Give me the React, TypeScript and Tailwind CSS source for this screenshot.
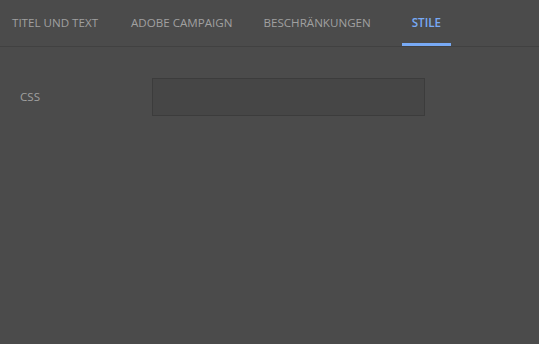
import React from 'react';

const tabs = [
  { label: 'TITEL UND TEXT', cls: 'ml-[2px]' },
  { label: 'ADOBE CAMPAIGN', cls: 'ml-[13px]' },
  { label: 'BESCHRÄNKUNGEN', cls: 'ml-[11px]' },
  { label: 'STILE', cls: 'ml-[21px]' },
];

export default function App() {
  const active = 3;

  return (
    <div className="w-[539px] h-[344px] bg-[#4b4b4b] font-['Open_Sans',sans-serif] overflow-hidden">
      <div className="flex h-[47px] border-b border-[#414141]">
        {tabs.map((tab, i) => (
          <button
            key={tab.label}
            className={
              i === active
                ? `${tab.cls} px-[10px] text-[11.6px] font-semibold text-[#78aaf5] border-b-[3px] border-[#78aaf5] pt-[3px]`
                : `${tab.cls} px-[10px] text-[11.6px] text-[#a0a0a0] border-b-[3px] border-transparent pt-[3px]`
            }
          >
            {tab.label}
          </button>
        ))}
      </div>

      <div className="flex items-center pt-[31px] pl-[20px]">
        <label className="w-[132px] text-[11.6px] text-[#a0a0a0]">CSS</label>
        <input className="w-[273px] h-[38px] bg-[#464646] border border-[#3c3c3c] outline-none" />
      </div>
    </div>
  );
}
